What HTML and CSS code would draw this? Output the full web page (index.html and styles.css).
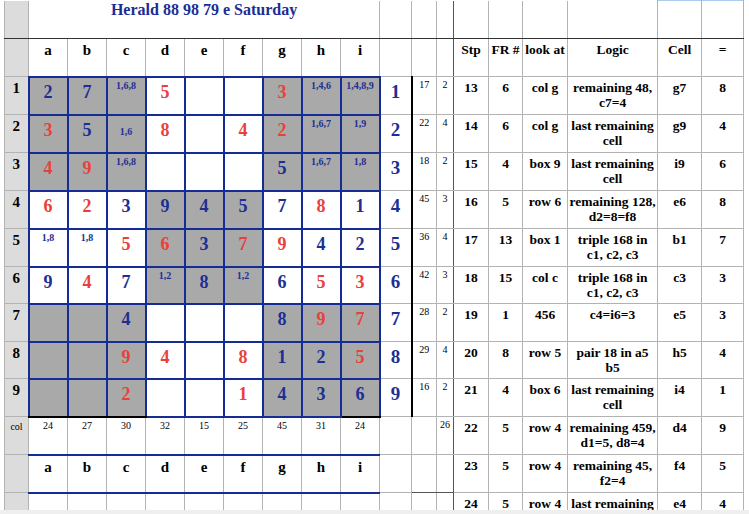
FILE: index.html
```html
<!DOCTYPE html>
<html>
<head>
<meta charset="utf-8">
<link rel="stylesheet" href="styles.css">
</head>
<body>
<div class="sheet">
<table class="grid">
<colgroup>
<col class="w-lab"><col class="w-c"><col class="w-c"><col class="w-c"><col class="w-c"><col class="w-c"><col class="w-c"><col class="w-c"><col class="w-c"><col class="w-c">
<col class="w-rl"><col class="w-s1"><col class="w-s2"><col class="w-stp"><col class="w-fr"><col class="w-look"><col class="w-logic"><col class="w-cell"><col class="w-eq">
</colgroup>
<tr class="r-title">
<td class="lab tl"></td><td class="title" colspan="9">Herald 88 98 79 e Saturday</td><td class="tl"></td><td class="tl"></td><td class="tl s2"></td><td></td><td></td><td></td><td></td><td class="sel"></td><td class="sel"></td>
</tr>
<tr class="r38">
<td class="lab"></td><td class="hd">a</td><td class="hd">b</td><td class="hd">c</td><td class="hd">d</td><td class="hd">e</td><td class="hd">f</td><td class="hd">g</td><td class="hd">h</td><td class="hd">i</td><td></td><td></td><td class="s2"></td><td class="t">Stp</td><td class="t">FR #</td><td class="t">look at</td><td class="t">Logic</td><td class="t">Cell</td><td class="t">=</td>
</tr>
<tr class="r38">
<td class="lab">1</td><td class="sq sh dg b">2</td><td class="sq sh dg b">7</td><td class="sq sh cd">1,6,8</td><td class="sq dg r">5</td><td class="sq"></td><td class="sq"></td><td class="sq sh dg r">3</td><td class="sq sh cd">1,4,6</td><td class="sq sh cd">1,4,8,9</td><td class="rl">1</td><td class="s s1">17</td><td class="s s2">2</td><td class="t">13</td><td class="t">6</td><td class="t">col g</td><td class="t">remaining 48,<br>c7=4</td><td class="t">g7</td><td class="t">8</td>
</tr>
<tr class="r38">
<td class="lab">2</td><td class="sq sh dg r">3</td><td class="sq sh dg b">5</td><td class="sq sh cd low">1,6</td><td class="sq dg r">8</td><td class="sq"></td><td class="sq dg r">4</td><td class="sq sh dg r">2</td><td class="sq sh cd">1,6,7</td><td class="sq sh cd">1,9</td><td class="rl">2</td><td class="s s1">22</td><td class="s s2">4</td><td class="t">14</td><td class="t">6</td><td class="t">col g</td><td class="t">last remaining<br>cell</td><td class="t">g9</td><td class="t">4</td>
</tr>
<tr class="r38">
<td class="lab">3</td><td class="sq sh dg r">4</td><td class="sq sh dg r">9</td><td class="sq sh cd">1,6,8</td><td class="sq"></td><td class="sq"></td><td class="sq"></td><td class="sq sh dg b">5</td><td class="sq sh cd">1,6,7</td><td class="sq sh cd">1,8</td><td class="rl">3</td><td class="s s1">18</td><td class="s s2">2</td><td class="t">15</td><td class="t">4</td><td class="t">box 9</td><td class="t">last remaining<br>cell</td><td class="t">i9</td><td class="t">6</td>
</tr>
<tr class="r38">
<td class="lab">4</td><td class="sq dg r">6</td><td class="sq dg r">2</td><td class="sq dg b">3</td><td class="sq sh dg b">9</td><td class="sq sh dg b">4</td><td class="sq sh dg b">5</td><td class="sq dg b">7</td><td class="sq dg r">8</td><td class="sq dg b">1</td><td class="rl">4</td><td class="s s1">45</td><td class="s s2">3</td><td class="t">16</td><td class="t">5</td><td class="t">row 6</td><td class="t">remaining 128,<br>d2=8=f8</td><td class="t">e6</td><td class="t">8</td>
</tr>
<tr class="r38">
<td class="lab">5</td><td class="sq cd">1,8</td><td class="sq cd">1,8</td><td class="sq dg r">5</td><td class="sq sh dg r">6</td><td class="sq sh dg b">3</td><td class="sq sh dg r">7</td><td class="sq dg r">9</td><td class="sq dg b">4</td><td class="sq dg b">2</td><td class="rl">5</td><td class="s s1">36</td><td class="s s2">4</td><td class="t">17</td><td class="t">13</td><td class="t">box 1</td><td class="t">triple 168 in<br>c1, c2, c3</td><td class="t">b1</td><td class="t">7</td>
</tr>
<tr class="r37">
<td class="lab">6</td><td class="sq dg b">9</td><td class="sq dg r">4</td><td class="sq dg b">7</td><td class="sq sh cd">1,2</td><td class="sq sh dg b">8</td><td class="sq sh cd">1,2</td><td class="sq dg b">6</td><td class="sq dg r">5</td><td class="sq dg r">3</td><td class="rl">6</td><td class="s s1">42</td><td class="s s2">3</td><td class="t">18</td><td class="t">15</td><td class="t">col c</td><td class="t">triple 168 in<br>c1, c2, c3</td><td class="t">c3</td><td class="t">3</td>
</tr>
<tr class="r38">
<td class="lab">7</td><td class="sq sh"></td><td class="sq sh"></td><td class="sq sh dg b">4</td><td class="sq"></td><td class="sq"></td><td class="sq"></td><td class="sq sh dg b">8</td><td class="sq sh dg r">9</td><td class="sq sh dg r">7</td><td class="rl">7</td><td class="s s1">28</td><td class="s s2">2</td><td class="t">19</td><td class="t">1</td><td class="t">456</td><td class="t">c4=i6=3</td><td class="t">e5</td><td class="t">3</td>
</tr>
<tr class="r37">
<td class="lab">8</td><td class="sq sh"></td><td class="sq sh"></td><td class="sq sh dg r">9</td><td class="sq dg r">4</td><td class="sq"></td><td class="sq dg r">8</td><td class="sq sh dg b">1</td><td class="sq sh dg b">2</td><td class="sq sh dg r">5</td><td class="rl">8</td><td class="s s1">29</td><td class="s s2">4</td><td class="t">20</td><td class="t">8</td><td class="t">row 5</td><td class="t">pair 18 in a5<br>b5</td><td class="t">h5</td><td class="t">4</td>
</tr>
<tr class="r38">
<td class="lab">9</td><td class="sq sh bk"></td><td class="sq sh bk"></td><td class="sq sh dg r bk">2</td><td class="sq"></td><td class="sq"></td><td class="sq dg r">1</td><td class="sq sh dg b">4</td><td class="sq sh dg b">3</td><td class="sq sh dg b bk">6</td><td class="rl">9</td><td class="s s1">16</td><td class="s s2">2</td><td class="t">21</td><td class="t">4</td><td class="t">box 6</td><td class="t">last remaining<br>cell</td><td class="t">i4</td><td class="t">1</td>
</tr>
<tr class="r38">
<td class="lab small">col</td><td class="s">24</td><td class="s">27</td><td class="s">30</td><td class="s">32</td><td class="s">15</td><td class="s">25</td><td class="s">45</td><td class="s">31</td><td class="s">24</td><td></td><td></td><td class="s s2">26</td><td class="t">22</td><td class="t">5</td><td class="t">row 4</td><td class="t">remaining 459,<br>d1=5, d8=4</td><td class="t">d4</td><td class="t">9</td>
</tr>
<tr class="r38">
<td class="lab"></td><td class="hd bl">a</td><td class="hd bl">b</td><td class="hd bl">c</td><td class="hd bl">d</td><td class="hd bl">e</td><td class="hd bl">f</td><td class="hd bl">g</td><td class="hd bl">h</td><td class="hd bl">i</td><td></td><td class="dk"></td><td class="dk s2"></td><td class="t">23</td><td class="t">5</td><td class="t">row 4</td><td class="t">remaining 45,<br>f2=4</td><td class="t">f4</td><td class="t">5</td>
</tr>
<tr class="r38">
<td class="lab"></td><td></td><td></td><td></td><td></td><td></td><td></td><td></td><td></td><td></td><td></td><td></td><td class="s2"></td><td class="t">24</td><td class="t">5</td><td class="t">row 4</td><td class="t">last remaining</td><td class="t">e4</td><td class="t">4</td>
</tr>
</table>
</div>
<div class="strip"></div>
</body>
</html>
```

FILE: styles.css
```css
html, body {
  margin: 0;
  padding: 0;
  background: #ffffff;
  font-family: "Liberation Serif", "Times New Roman", serif;
  color: #000;
}

.sheet {
  height: 510px;
  overflow: hidden;
}

.strip {
  height: 4px;
  background: #efefef;
}

.grid {
  border-collapse: collapse;
  table-layout: fixed;
  width: 739px;
  margin-left: 4px;
  border-left: 1px solid #444;
}

.w-lab { width: 24px; }
.w-c { width: 39px; }
.w-rl { width: 32px; }
.w-s1 { width: 25px; }
.w-s2 { width: 17px; }
.w-stp { width: 35px; }
.w-fr { width: 34px; }
.w-look { width: 45px; }
.w-logic { width: 90px; }
.w-cell { width: 44px; }
.w-eq { width: 42px; }

.grid td {
  border: 1px solid #b3b3b3;
  padding: 0;
  vertical-align: top;
  text-align: center;
  white-space: nowrap;
  overflow: hidden;
}

.r-title { height: 38px; }
.r38 { height: 38px; }
.r37 { height: 37px; }

.r-title td {
  border-top: none;
  border-bottom: 1px solid #333;
}
.r-title td:nth-child(n+14) {
  border-bottom-color: #b3b3b3;
}
.r-title td.sel {
  border-top: 1px solid #a9cbee;
}

.title {
  font-size: 16px;
  font-weight: bold;
  color: #1a2d95;
  line-height: 18px;
  padding-top: 0 !important;
  border-left: 1px solid #333 !important;
}

.lab {
  background: #dcdcdc;
  font-size: 15px;
  font-weight: bold;
  padding-top: 3px !important;
}
.lab.small {
  font-size: 10px;
  font-weight: normal;
  padding-top: 4px !important;
}

.hd {
  font-size: 15px;
  font-weight: bold;
  padding-top: 3px !important;
}
.hd.bl {
  border-top: 2px solid #142c93 !important;
  border-bottom: 2px solid #142c93 !important;
}

.grid td.sq {
  border: 2px solid #142c93;
}
.grid td.sq.bk {
  border-bottom-color: #000;
}
.sh {
  background: #a9a9a9;
}

.dg {
  font-size: 18px;
  font-weight: bold;
  padding-top: 4px !important;
}
.b { color: #1c2f93; }
.r { color: #e8413b; }

.cd {
  font-size: 10px;
  font-weight: bold;
  color: #1c2f93;
  padding-top: 2px !important;
}
.cd.low {
  padding-top: 10px !important;
}

.rl {
  font-size: 19px;
  font-weight: bold;
  color: #1c2f93;
  padding-top: 4px !important;
}

.s {
  font-size: 10px;
  padding-top: 2px !important;
}
.grid td.s1 {
  border-left: 2px solid #000;
}
.grid td.s2 {
  border-right-color: #555;
}
.grid td.dk {
  border-top-color: #555;
  border-bottom-color: #555;
}

.t {
  font-size: 13.5px;
  font-weight: bold;
  line-height: 15px;
  padding-top: 3px !important;
}
```
